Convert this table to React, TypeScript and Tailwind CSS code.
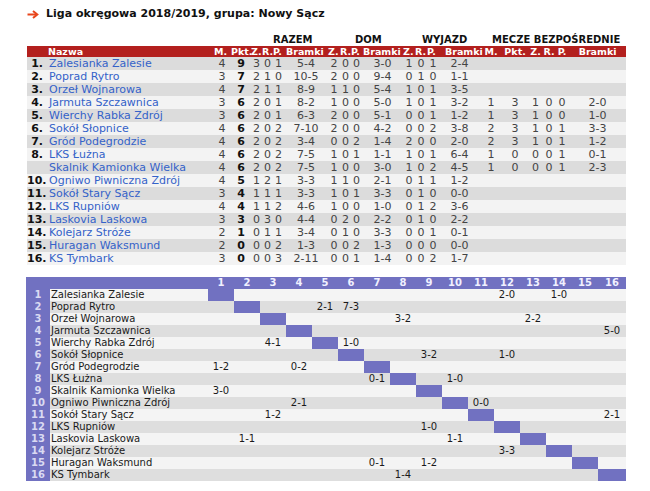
import React from 'react'

type Team = {
  pos: string
  name: string
  total: [string, string, string, string, string, string]
  home: [string, string, string, string]
  away: [string, string, string, string]
  h2h?: [string, string, string, string, string, string]
}

const teams: Team[] = [
  { pos: '1.', name: 'Zalesianka Zalesie', total: ['4', '9', '3', '0', '1', '5-4'], home: ['2', '0', '0', '3-0'], away: ['1', '0', '1', '2-4'] },
  { pos: '2.', name: 'Poprad Rytro', total: ['3', '7', '2', '1', '0', '10-5'], home: ['2', '0', '0', '9-4'], away: ['0', '1', '0', '1-1'] },
  { pos: '3.', name: 'Orzeł Wojnarowa', total: ['4', '7', '2', '1', '1', '8-9'], home: ['1', '1', '0', '5-4'], away: ['1', '0', '1', '3-5'] },
  { pos: '4.', name: 'Jarmuta Szczawnica', total: ['3', '6', '2', '0', '1', '8-2'], home: ['1', '0', '0', '5-0'], away: ['1', '0', '1', '3-2'], h2h: ['1', '3', '1', '0', '0', '2-0'] },
  { pos: '5.', name: 'Wierchy Rabka Zdrój', total: ['3', '6', '2', '0', '1', '6-3'], home: ['2', '0', '0', '5-1'], away: ['0', '0', '1', '1-2'], h2h: ['1', '3', '1', '0', '0', '1-0'] },
  { pos: '6.', name: 'Sokół Słopnice', total: ['4', '6', '2', '0', '2', '7-10'], home: ['2', '0', '0', '4-2'], away: ['0', '0', '2', '3-8'], h2h: ['2', '3', '1', '0', '1', '3-3'] },
  { pos: '7.', name: 'Gród Podegrodzie', total: ['4', '6', '2', '0', '2', '3-4'], home: ['0', '0', '2', '1-4'], away: ['2', '0', '0', '2-0'], h2h: ['2', '3', '1', '0', '1', '1-2'] },
  { pos: '8.', name: 'LKS Łużna', total: ['4', '6', '2', '0', '2', '7-5'], home: ['1', '0', '1', '1-1'], away: ['1', '0', '1', '6-4'], h2h: ['1', '0', '0', '0', '1', '0-1'] },
  { pos: '', name: 'Skalnik Kamionka Wielka', total: ['4', '6', '2', '0', '2', '7-5'], home: ['1', '0', '0', '3-0'], away: ['1', '0', '2', '4-5'], h2h: ['1', '0', '0', '0', '1', '2-3'] },
  { pos: '10.', name: 'Ogniwo Piwniczna Zdrój', total: ['4', '5', '1', '2', '1', '3-3'], home: ['1', '1', '0', '2-1'], away: ['0', '1', '1', '1-2'] },
  { pos: '11.', name: 'Sokół Stary Sącz', total: ['3', '4', '1', '1', '1', '3-3'], home: ['1', '0', '1', '3-3'], away: ['0', '1', '0', '0-0'] },
  { pos: '12.', name: 'LKS Rupniów', total: ['4', '4', '1', '1', '2', '4-6'], home: ['1', '0', '0', '1-0'], away: ['0', '1', '2', '3-6'] },
  { pos: '13.', name: 'Laskovia Laskowa', total: ['3', '3', '0', '3', '0', '4-4'], home: ['0', '2', '0', '2-2'], away: ['0', '1', '0', '2-2'] },
  { pos: '14.', name: 'Kolejarz Stróże', total: ['2', '1', '0', '1', '1', '3-4'], home: ['0', '1', '0', '3-3'], away: ['0', '0', '1', '0-1'] },
  { pos: '15.', name: 'Huragan Waksmund', total: ['2', '0', '0', '0', '2', '1-3'], home: ['0', '0', '2', '1-3'], away: ['0', '0', '0', '0-0'] },
  { pos: '16.', name: 'KS Tymbark', total: ['3', '0', '0', '0', '3', '2-11'], home: ['0', '0', '1', '1-4'], away: ['0', '0', '2', '1-7'] },
]

// wyniki: [wiersz, kolumna, wynik]
const results: [number, number, string][] = [
  [1, 12, '2-0'], [1, 14, '1-0'],
  [2, 5, '2-1'], [2, 6, '7-3'],
  [3, 8, '3-2'], [3, 13, '2-2'],
  [4, 16, '5-0'],
  [5, 3, '4-1'], [5, 6, '1-0'],
  [6, 9, '3-2'], [6, 12, '1-0'],
  [7, 1, '1-2'], [7, 4, '0-2'],
  [8, 7, '0-1'], [8, 10, '1-0'],
  [9, 1, '3-0'],
  [10, 4, '2-1'], [10, 11, '0-0'],
  [11, 3, '1-2'], [11, 16, '2-1'],
  [12, 9, '1-0'],
  [13, 2, '1-1'], [13, 10, '1-1'],
  [14, 12, '3-3'],
  [15, 7, '0-1'], [15, 9, '1-2'],
  [16, 8, '1-4'],
]

const score = (r: number, c: number) => results.find(([a, b]) => a === r && b === c)?.[2] ?? ''

const cols = Array.from({ length: 16 }, (_, i) => i + 1)

function Arrow() {
  return (
    <svg width="12" height="9" viewBox="0 0 12 9" className="mr-[7px]">
      <path d="M0.5 4.5H10" stroke="#e8461c" strokeWidth="2" />
      <path d="M6 1L10.3 4.5L6 8" stroke="#e8461c" strokeWidth="2" fill="none" />
    </svg>
  )
}

export default function App() {
  return (
    <div className="w-[650px] h-[491px] bg-white font-['DejaVu_Sans',sans-serif] overflow-hidden">
      {/* tytuł */}
      <div className="h-[28px] flex items-center pl-[27px]">
        <Arrow />
        <span className="text-[11px] font-bold text-[#111]">Liga okręgowa 2018/2019, grupa: Nowy Sącz</span>
      </div>

      {/* tabela */}
      <table className="table-fixed w-[599px] ml-[27px] mt-[6px] text-[11px]">
        <colgroup>
          <col className="w-[20px]" />
          <col className="w-[166px]" />
          <col className="w-[18px]" />
          <col className="w-[20px]" />
          <col className="w-[11px]" />
          <col className="w-[11px]" />
          <col className="w-[11px]" />
          <col className="w-[44px]" />
          <col className="w-[12px]" />
          <col className="w-[11px]" />
          <col className="w-[11px]" />
          <col className="w-[41px]" />
          <col className="w-[12px]" />
          <col className="w-[12px]" />
          <col className="w-[12px]" />
          <col className="w-[41px]" />
          <col className="w-[22px]" />
          <col className="w-[26px]" />
          <col className="w-[15px]" />
          <col className="w-[12px]" />
          <col className="w-[14px]" />
          <col className="w-[57px]" />
        </colgroup>
        <thead>
          <tr className="h-[12px] text-[10px] font-bold text-[#111] leading-[12px]">
            <th colSpan={2} />
            <th colSpan={6} className="text-left pl-[60px] whitespace-nowrap">RAZEM</th>
            <th colSpan={4} className="text-left pl-[27px] whitespace-nowrap">DOM</th>
            <th colSpan={4} className="text-left pl-[19px] whitespace-nowrap">WYJAZD</th>
            <th colSpan={6} className="text-left pl-[12px] whitespace-nowrap">MECZE BEZPOŚREDNIE</th>
          </tr>
          <tr className="h-[11px] bg-[#b3201e] text-white text-[9.5px] font-bold leading-[11px] whitespace-nowrap">
            <th />
            <th className="text-left pl-[1px]">Nazwa</th>
            <th className="text-left pl-[1px]">M.</th>
            <th className="text-left">Pkt.</th>
            <th className="text-left">Z.</th>
            <th className="text-left">R.</th>
            <th className="text-left">P.</th>
            <th className="text-left pl-[2px]">Bramki</th>
            <th className="text-left">Z.</th>
            <th className="text-left">R.</th>
            <th className="text-left">P.</th>
            <th className="text-left pl-[1px]">Bramki</th>
            <th className="text-left">Z.</th>
            <th className="text-left">R.</th>
            <th className="text-left">P.</th>
            <th className="text-left pl-[6px]">Bramki</th>
            <th className="text-center">M.</th>
            <th className="text-center">Pkt.</th>
            <th className="text-center">Z.</th>
            <th className="text-center">R.</th>
            <th className="text-center">P.</th>
            <th className="text-center">Bramki</th>
          </tr>
        </thead>
        <tbody>
          {teams.map((t, i) => (
            <tr key={t.name} className={`h-[13px] leading-[13px] text-[#444] ${i % 2 === 0 ? 'bg-[#dcdcdc]' : 'bg-[#f3f3f3]'}`}>
              <td className="text-right pr-[4px] font-bold text-[#111] whitespace-nowrap">{t.pos}</td>
              <td className="pl-[2px] text-[#3462c9] whitespace-nowrap">{t.name}</td>
              <td className="text-center">{t.total[0]}</td>
              <td className="text-center font-bold text-[#111]">{t.total[1]}</td>
              <td className="text-center">{t.total[2]}</td>
              <td className="text-center">{t.total[3]}</td>
              <td className="text-center">{t.total[4]}</td>
              <td className="text-center">{t.total[5]}</td>
              <td className="text-center">{t.home[0]}</td>
              <td className="text-center">{t.home[1]}</td>
              <td className="text-center">{t.home[2]}</td>
              <td className="text-center">{t.home[3]}</td>
              <td className="text-center">{t.away[0]}</td>
              <td className="text-center">{t.away[1]}</td>
              <td className="text-center">{t.away[2]}</td>
              <td className="text-center">{t.away[3]}</td>
              {(t.h2h ?? ['', '', '', '', '', '']).map((v, k) => (
                <td key={k} className="text-center">{v}</td>
              ))}
            </tr>
          ))}
        </tbody>
      </table>

      {/* tabela wyników */}
      <table className="table-fixed w-[600px] ml-[26px] mt-[12px] text-[10px]">
        <colgroup>
          <col className="w-[24px]" />
          <col className="w-[158px]" />
          {cols.map((c) => (
            <col key={c} className={c === 16 ? 'w-[28px]' : 'w-[26px]'} />
          ))}
        </colgroup>
        <thead>
          <tr className="h-[12px] leading-[12px] bg-[#7171c1] text-[#f0f0ff] font-bold">
            <th />
            <th />
            {cols.map((c) => (
              <th key={c} className="text-center">{c}</th>
            ))}
          </tr>
        </thead>
        <tbody>
          {teams.map((t, i) => (
            <tr key={t.name} className={`h-[12px] leading-[12px] text-[#1a1a1a] ${i % 2 === 0 ? 'bg-[#f4f4f4]' : 'bg-[#dedede]'}`}>
              <td className="bg-[#7171c1] text-[#dadaf2] text-center font-bold">{i + 1}</td>
              <td className="pl-[1px] whitespace-nowrap">{t.name}</td>
              {cols.map((c) =>
                c === i + 1 ? (
                  <td key={c} className="bg-[#7171c1]" />
                ) : (
                  <td key={c} className="text-center whitespace-nowrap">{score(i + 1, c)}</td>
                )
              )}
            </tr>
          ))}
        </tbody>
      </table>
    </div>
  )
}
